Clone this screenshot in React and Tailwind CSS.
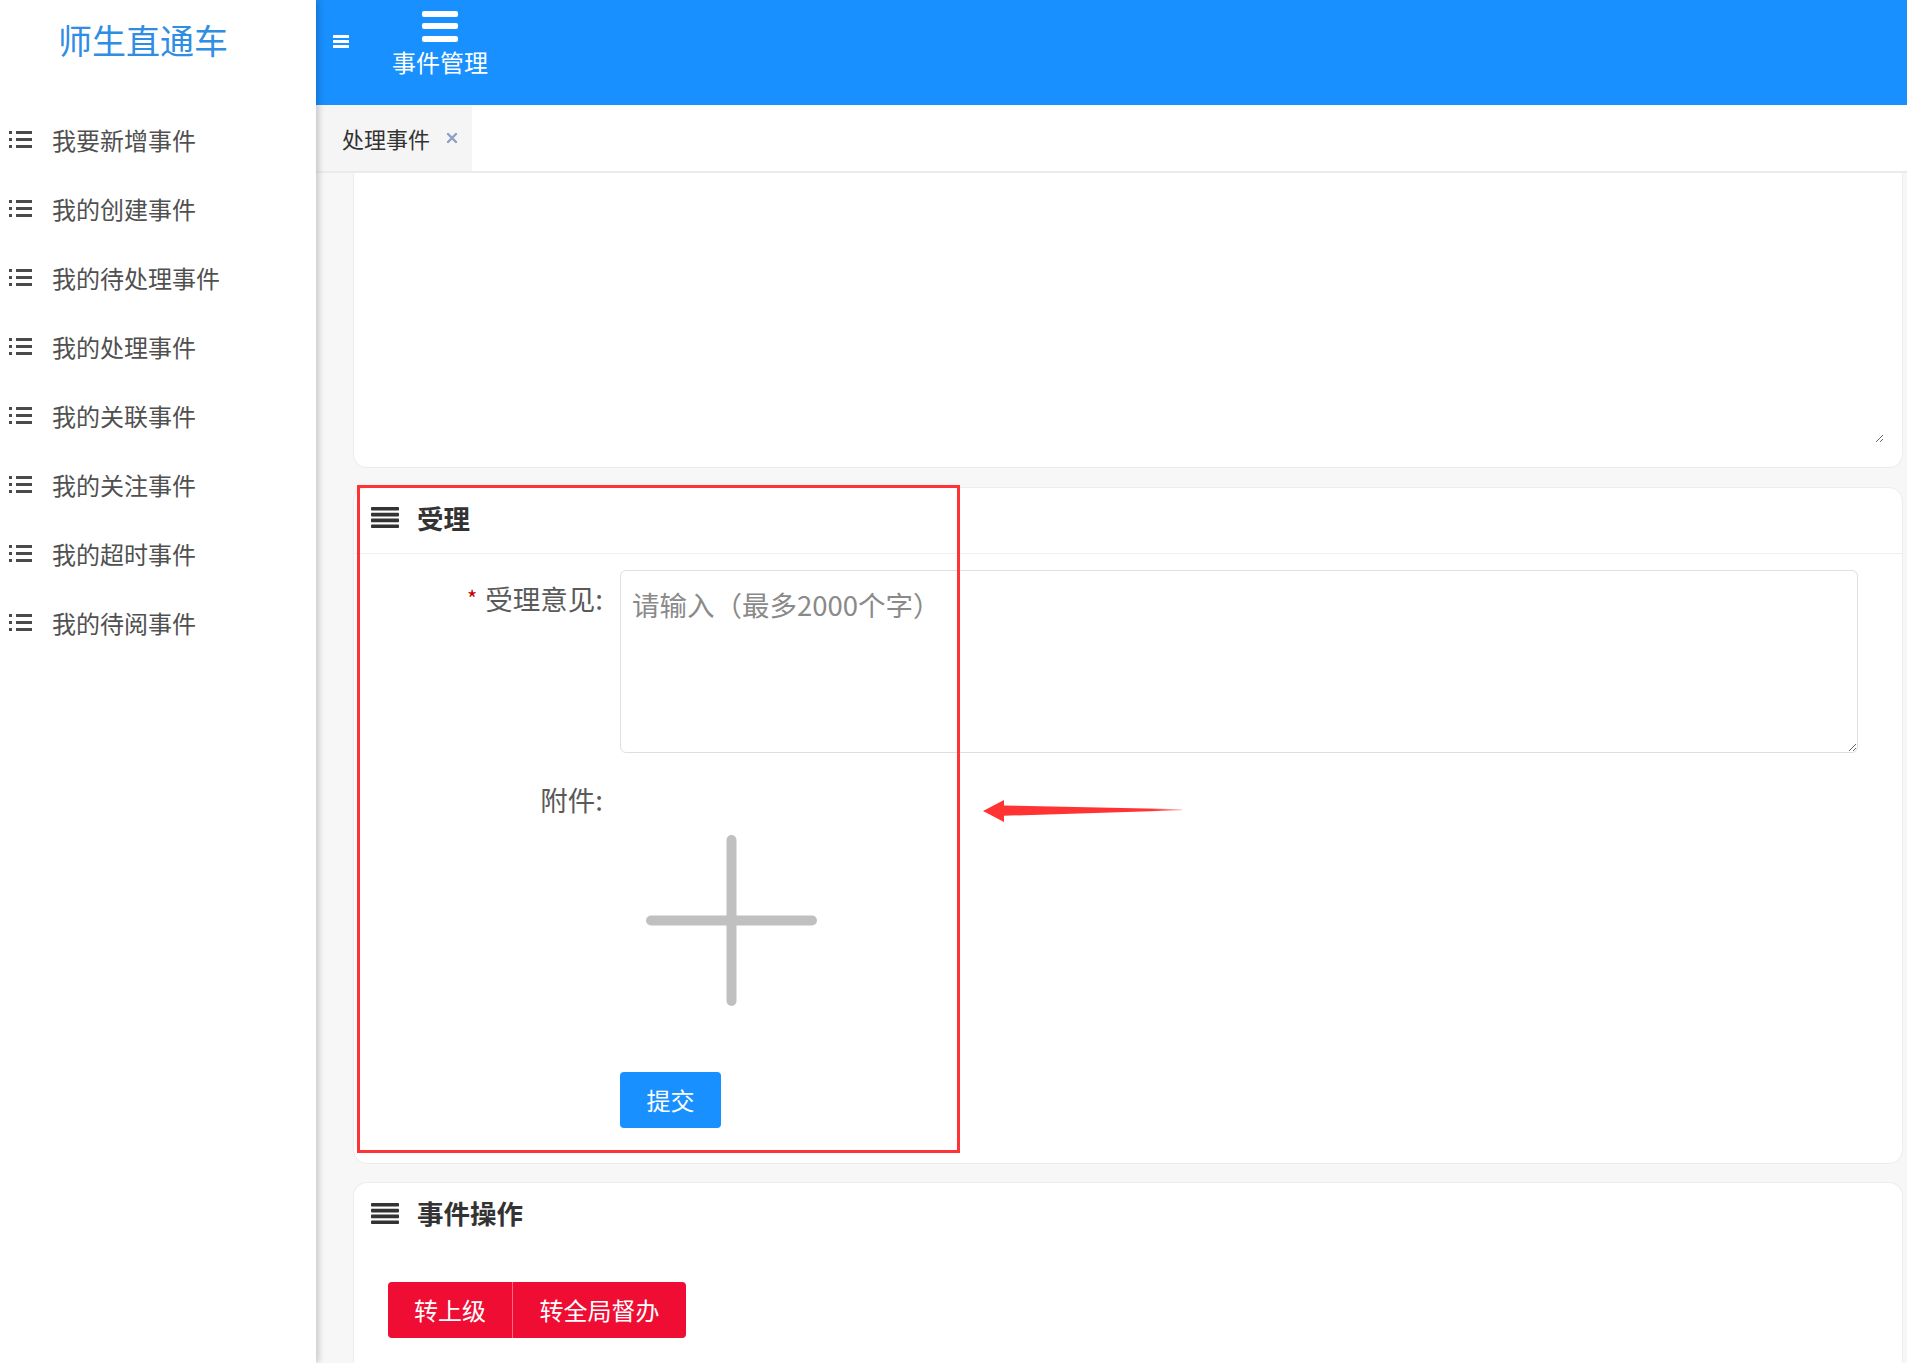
import React from "react";

const menu = [
  "我要新增事件",
  "我的创建事件",
  "我的待处理事件",
  "我的处理事件",
  "我的关联事件",
  "我的关注事件",
  "我的超时事件",
  "我的待阅事件",
];

function ListIcon() {
  return (
    <svg width="23" height="19" viewBox="0 0 23 19" fill="#4a4a4a">
      <rect x="0" y="1" width="3" height="3" />
      <rect x="7" y="1" width="16" height="3" />
      <rect x="0" y="8" width="3" height="3" />
      <rect x="7" y="8" width="16" height="3" />
      <rect x="0" y="15" width="3" height="3" />
      <rect x="7" y="15" width="16" height="3" />
    </svg>
  );
}

function BarsIcon() {
  return (
    <svg width="28" height="21" viewBox="0 0 28 21" fill="#333">
      <rect x="0" y="0" width="28" height="3.6" rx="0.8" />
      <rect x="0" y="5.8" width="28" height="3.6" rx="0.8" />
      <rect x="0" y="11.6" width="28" height="3.6" rx="0.8" />
      <rect x="0" y="17.4" width="28" height="3.6" rx="0.8" />
    </svg>
  );
}

function SectionTitle({ title, divider }) {
  return (
    <div className={`h-[66px] flex items-center gap-[18px] pl-[17px] pb-[6px] ${divider ? "border-b border-[#f0f0f0]" : ""}`}>
      <BarsIcon />
      <span className="text-[26.5px] font-bold text-[#333] leading-[32px]">{title}</span>
    </div>
  );
}

export default function App() {
  return (
    <div className="relative w-[1907px] h-[1363px] overflow-hidden flex bg-white font-['Noto_Sans_CJK_SC','Noto_Sans',sans-serif]">
      {/* sidebar */}
      <aside className="w-[316px] shrink-0 bg-white relative z-10 shadow-[3px_0_6px_rgba(0,0,0,0.18)]">
        <div className="h-[105px] pt-[18px] pl-[58px] text-[34px] leading-[44px] text-[#2f8de4]">师生直通车</div>
        <nav>
          {menu.map((m) => (
            <div key={m} className="h-[69px] flex items-center gap-[20px] pl-[9px] text-[24px] leading-[30px] text-[#505050]">
              <ListIcon />
              <span>{m}</span>
            </div>
          ))}
        </nav>
      </aside>

      <main className="flex-1 min-w-0 flex flex-col">
        {/* top bar */}
        <header className="h-[105px] shrink-0 bg-[#1890ff] flex items-start pl-[17px] text-white">
          <svg className="mt-[35px]" width="16" height="13" viewBox="0 0 16 13" fill="#fff">
            <rect x="0" y="0" width="16" height="3" rx="0.5" />
            <rect x="0" y="5" width="16" height="3" rx="0.5" />
            <rect x="0" y="10" width="16" height="3" rx="0.5" />
          </svg>
          <div className="ml-[43px] pt-[11px] flex flex-col items-center">
            <svg width="36" height="31" viewBox="0 0 36 31" fill="#fff">
              <rect x="0" y="0" width="36" height="6" rx="2" />
              <rect x="0" y="12" width="36" height="6" rx="2" />
              <rect x="0" y="25" width="36" height="6" rx="2" />
            </svg>
            <span className="mt-[6px] text-[24px] leading-[28px]">事件管理</span>
          </div>
        </header>

        {/* tabs */}
        <div className="h-[68px] shrink-0 bg-white border-b-2 border-[#ebebeb] flex">
          <div className="w-[156px] bg-[#f5f5f5] flex items-center pl-[26px] gap-[16px]">
            <span className="text-[22px] leading-[28px] text-[#333]">处理事件</span>
            <svg width="12" height="12" viewBox="0 0 12 12" stroke="#8c9fc7" strokeWidth="2.4" strokeLinecap="round">
              <path d="M2 2l8 8M10 2l-8 8" />
            </svg>
          </div>
        </div>

        {/* page body */}
        <div className="flex-1 bg-[#f7f7f7] pl-[37px] pr-[4px] flex flex-col">
          <div className="h-[295px] shrink-0 bg-white border border-t-0 border-[#ececec] rounded-b-[14px] flex pr-[18px] pb-[24px]">
            <textarea className="flex-1 border-0 outline-none bg-transparent" />
          </div>

          <section className="mt-[19px] h-[677px] shrink-0 bg-white border border-[#ececec] rounded-[14px]">
            <SectionTitle title="受理" divider />
            <div className="pt-[16px] grid grid-cols-[249px_1fr] gap-x-[17px] pr-[44px]">
              <label className="pt-[10px] text-right text-[27.5px] leading-[36px] text-[#5a5a5a]">
                <span className="text-[#c00000] text-[22px] mr-[8px] relative top-[-3px]">*</span>受理意见:
              </label>
              <textarea
                className="h-[183px] border border-[#dcdfe6] rounded-[6px] px-[11px] pt-[15px] text-[27.5px] leading-[36px] outline-none placeholder:text-[#8a8a8a]"
                placeholder="请输入（最多2000个字）"
              />

              <label className="mt-[28px] text-right text-[27.5px] leading-[36px] text-[#5a5a5a]">附件:</label>
              <div className="mt-[28px] pt-[28px]">
                <div className="w-[223px] h-[223px] flex items-center justify-center">
                  <svg width="171" height="171" viewBox="0 0 171 171" stroke="#c0c0c0" strokeWidth="10" strokeLinecap="round">
                    <path d="M5 85.5h161M85.5 5v161" />
                  </svg>
                </div>
                <button className="mt-[40px] w-[101px] h-[56px] rounded-[4px] bg-[#1890ff] text-white text-[24px] leading-[30px]">
                  提交
                </button>
              </div>
            </div>
          </section>

          <section className="mt-[18px] flex-1 bg-white border border-b-0 border-[#ececec] rounded-t-[14px]">
            <SectionTitle title="事件操作" />
            <div className="pt-[33px] pl-[34px] flex">
              <button className="w-[125px] h-[56px] rounded-l-[4px] bg-[#ef0d33] text-white text-[24px] leading-[30px] border-r border-[#ff6a84]">
                转上级
              </button>
              <button className="w-[173px] h-[56px] rounded-r-[4px] bg-[#ef0d33] text-white text-[24px] leading-[30px]">
                转全局督办
              </button>
            </div>
          </section>
        </div>
      </main>

      {/* red callout box + arrow */}
      <div className="absolute left-[357px] top-[485px] w-[603px] h-[668px] border-[3px] border-[#ff3333] pointer-events-none" />
      <svg className="absolute left-[980px] top-[796px] pointer-events-none" width="205" height="28" viewBox="0 0 205 28">
        <defs>
          <linearGradient id="tail" x1="0" x2="1" y1="0" y2="0">
            <stop offset="0" stopColor="#ff3333" />
            <stop offset="0.85" stopColor="#ff3333" />
            <stop offset="1" stopColor="#ff3333" stopOpacity="0.3" />
          </linearGradient>
        </defs>
        <polygon points="3,15 24,4 24,9.5 202,13.3 202,14.2 24,19.8 24,26" fill="url(#tail)" />
      </svg>
    </div>
  );
}
